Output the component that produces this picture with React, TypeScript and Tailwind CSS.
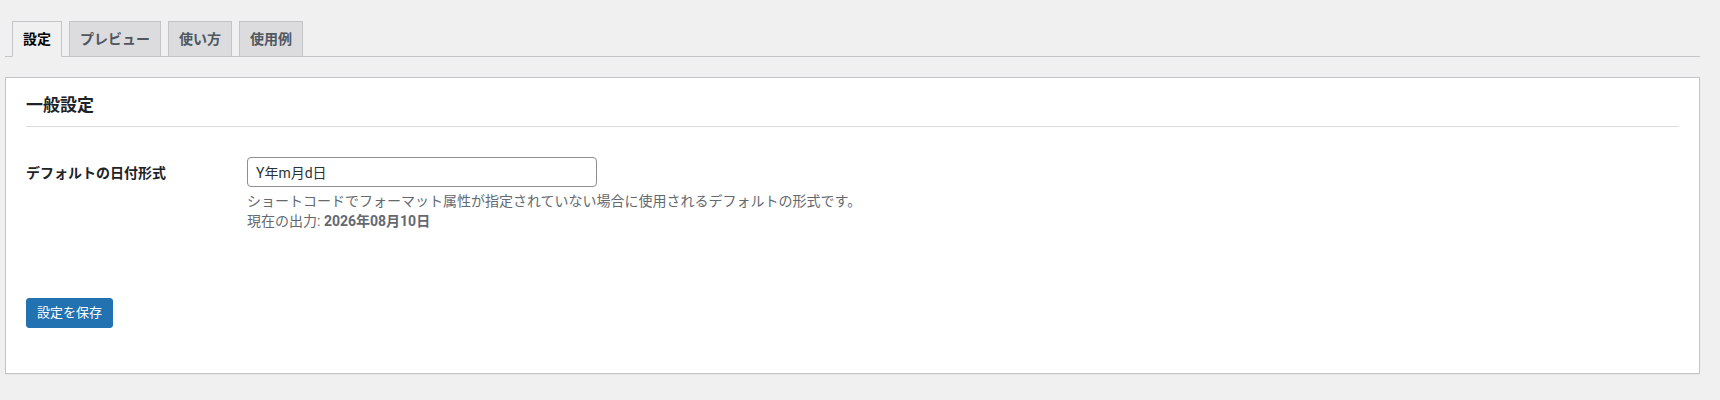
import { useState } from 'react'

const FONT = 'font-["Roboto","Noto_Sans_CJK_JP",sans-serif]'

const tabs = ['設定', 'プレビュー', '使い方', '使用例']

export default function App() {
  const [activeTab, setActiveTab] = useState(0)
  const [format, setFormat] = useState('Y年m月d日')

  return (
    <div className={`min-h-[400px] bg-[#f0f0f1] pt-[21px] pl-[5px] pr-[20px] text-[#1d2327] ${FONT}`}>
      {/* タブ */}
      <div className="flex items-end gap-[7px] border-b border-[#c3c4c7] pl-[7px]">
        {tabs.map((tab, index) => (
          <button
            key={tab}
            onClick={() => setActiveTab(index)}
            className={
              index === activeTab
                ? '-mb-px border border-[#c3c4c7] border-b-[#f0f0f1] bg-[#f0f0f1] px-[10px] py-[5px] text-[14px] leading-[24px] font-semibold text-black'
                : '-mb-px border border-[#c3c4c7] bg-[#dcdcde] px-[10px] py-[5px] text-[14px] leading-[24px] font-semibold text-[#50575e]'
            }
          >
            {tab}
          </button>
        ))}
      </div>

      {/* 設定カード */}
      <div className="mt-[20px] border border-[#c3c4c7] bg-white px-[20px] pt-[18px] pb-[45px] shadow-[0_1px_1px_rgba(0,0,0,0.04)]">
        <h2 className="border-b border-[#dcdcde] pb-[12px] text-[17px] leading-[18px] font-semibold">一般設定</h2>

        <div className="mt-[30px] flex">
          <div className="w-[221px] shrink-0 pt-[6px] text-[14px] leading-[20px] font-semibold">
            デフォルトの日付形式
          </div>
          <div className="flex flex-col">
            <input
              type="text"
              value={format}
              onChange={(e) => setFormat(e.target.value)}
              className="h-[30px] w-[350px] rounded-[4px] border border-[#8c8f94] bg-white px-[8px] text-[14px] text-[#2c3338] outline-none"
            />
            <p className="mt-[4px] text-[14px] leading-[20px] text-[#646970]">
              ショートコードでフォーマット属性が指定されていない場合に使用されるデフォルトの形式です。
            </p>
            <p className="text-[14px] leading-[20px] text-[#646970]">
              現在の出力: <strong className="font-bold">2026年08月10日</strong>
            </p>
          </div>
        </div>

        <button className="mt-[67px] h-[30px] rounded-[3px] border border-[#2271b1] bg-[#2271b1] px-[10px] text-[13px] leading-[28px] text-white">
          設定を保存
        </button>
      </div>
    </div>
  )
}
